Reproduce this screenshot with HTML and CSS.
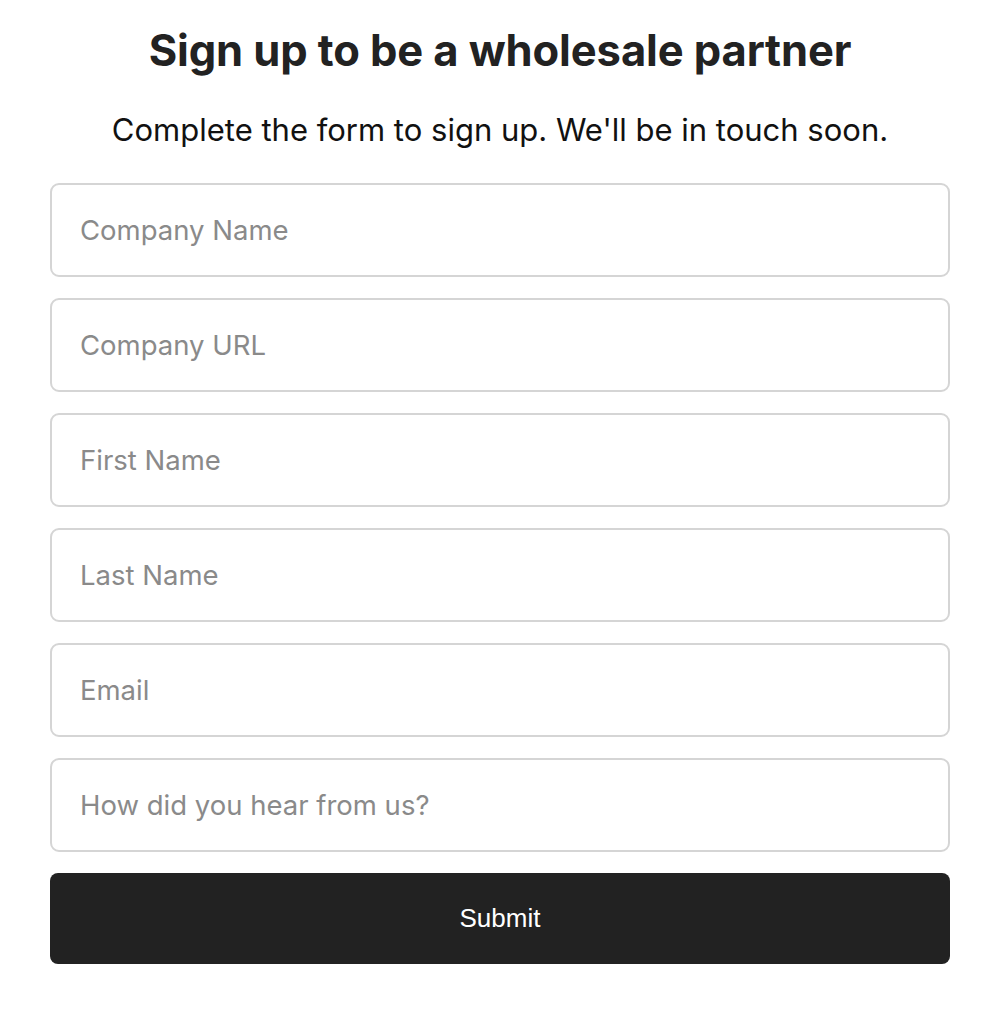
FILE: index.html
```html
<!DOCTYPE html>
<html>
<head>
<meta charset="utf-8">
<link rel="stylesheet" href="styles.css">
</head>
<body>
<main class="page">
  <h1 class="title">Sign up to be a wholesale partner</h1>
  <p class="subtitle">Complete the form to sign up. We'll be in touch soon.</p>
  <form class="form">
    <input class="field" type="text" placeholder="Company Name">
    <input class="field" type="text" placeholder="Company URL">
    <input class="field" type="text" placeholder="First Name">
    <input class="field" type="text" placeholder="Last Name">
    <input class="field" type="text" placeholder="Email">
    <input class="field" type="text" placeholder="How did you hear from us?">
    <button class="submit" type="button">Submit</button>
  </form>
</main>
</body>
</html>
```
FILE: styles.css
```css
html, body {
  margin: 0;
  padding: 0;
  background: #ffffff;
}
.page {
  width: 900px;
  margin: 0 0 0 50px;
  padding-top: 24px;
  font-family: Inter, "Noto Sans", sans-serif;
  color: #222222;
}
.title {
  margin: 0;
  text-align: center;
  font-size: 43.5px;
  line-height: 52px;
  font-weight: 700;
  letter-spacing: -0.1px;
  color: #222222;
}
.subtitle {
  margin: 35px 0 0;
  text-align: center;
  font-size: 31px;
  line-height: 38px;
  color: #111111;
}
.form {
  margin-top: 34px;
  display: flex;
  flex-direction: column;
  gap: 21px;
}
.field {
  box-sizing: border-box;
  width: 100%;
  height: 94px;
  border: 2px solid #d5d5d5;
  border-radius: 9px;
  padding: 0 28px;
  font-family: Inter, "Noto Sans", sans-serif;
  font-size: 27.5px;
  color: #222;
  outline: none;
  background: #fff;
}
.field::placeholder {
  color: #8a8a8a;
}
.submit {
  box-sizing: border-box;
  width: 100%;
  height: 91px;
  border: none;
  border-radius: 8px;
  background: #222222;
  color: #ffffff;
  font-family: "Liberation Sans", Arial, sans-serif;
  font-size: 26px;
}
```
